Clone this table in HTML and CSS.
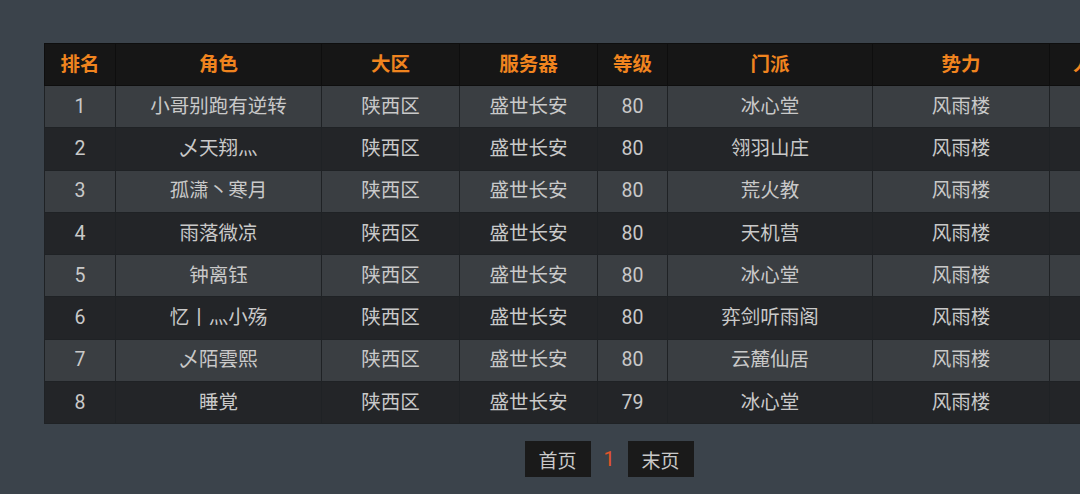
FILE: index.html
```html
<!DOCTYPE html>
<html lang="zh-CN">
<head>
<meta charset="utf-8">
<title>排名</title>
<link rel="stylesheet" href="styles.css">
</head>
<body>
<div class="page">
  <div class="table-wrap">
    <table class="rank">
      <colgroup>
        <col class="c-rank"><col class="c-role"><col class="c-area"><col class="c-server"><col class="c-level"><col class="c-school"><col class="c-force"><col class="c-extra">
      </colgroup>
      <thead>
        <tr><th>排名</th><th>角色</th><th>大区</th><th>服务器</th><th>等级</th><th>门派</th><th>势力</th><th>人气</th></tr>
      </thead>
      <tbody>
        <tr><td>1</td><td>小哥别跑有逆转</td><td>陕西区</td><td>盛世长安</td><td>80</td><td>冰心堂</td><td>风雨楼</td><td></td></tr>
        <tr><td>2</td><td>乄天翔灬</td><td>陕西区</td><td>盛世长安</td><td>80</td><td>翎羽山庄</td><td>风雨楼</td><td></td></tr>
        <tr><td>3</td><td>孤潇丶寒月</td><td>陕西区</td><td>盛世长安</td><td>80</td><td>荒火教</td><td>风雨楼</td><td></td></tr>
        <tr><td>4</td><td>雨落微凉</td><td>陕西区</td><td>盛世长安</td><td>80</td><td>天机营</td><td>风雨楼</td><td></td></tr>
        <tr><td>5</td><td>钟离钰</td><td>陕西区</td><td>盛世长安</td><td>80</td><td>冰心堂</td><td>风雨楼</td><td></td></tr>
        <tr><td>6</td><td>忆丨灬小殇</td><td>陕西区</td><td>盛世长安</td><td>80</td><td>弈剑听雨阁</td><td>风雨楼</td><td></td></tr>
        <tr><td>7</td><td>乄陌雲熙</td><td>陕西区</td><td>盛世长安</td><td>80</td><td>云麓仙居</td><td>风雨楼</td><td></td></tr>
        <tr><td>8</td><td>睡覚</td><td>陕西区</td><td>盛世长安</td><td>79</td><td>冰心堂</td><td>风雨楼</td><td></td></tr>
      </tbody>
    </table>
  </div>
  <div class="pager">
    <span class="pg-btn">首页</span>
    <span class="pg-cur">1</span>
    <span class="pg-btn">末页</span>
  </div>
</div>
</body>
</html>
```
FILE: styles.css
```css
html, body {
  margin: 0;
  padding: 0;
  background: #3b434b;
  overflow: hidden;
  width: 1080px;
  height: 494px;
}
body {
  font-family: Roboto, "Noto Sans CJK SC", sans-serif;
  color: #c9c9c9;
}
.page {
  padding: 43px 0 0 44px;
  box-sizing: border-box;
  height: 494px;
}
.table-wrap {
  width: 1036px;
  overflow: hidden;
}
.rank {
  border-collapse: collapse;
  table-layout: fixed;
  width: 1091px;
  font-size: 19.5px;
}
.c-rank { width: 71px; }
.c-role { width: 206px; }
.c-area { width: 138px; }
.c-server { width: 138px; }
.c-level { width: 70px; }
.c-school { width: 205px; }
.c-force { width: 177px; }
.c-extra { width: 86px; }
.rank th, .rank td {
  border: 1px solid #1f2225;
  text-align: center;
  padding: 0;
  white-space: nowrap;
  line-height: 1;
}
.rank th {
  height: 38px;
  padding-bottom: 3px;
  background: #161616;
  color: #f0841f;
  font-weight: 700;
  font-family: "Noto Sans CJK SC", sans-serif;
  border-color: #0e0e0e;
}
.rank td {
  height: 41.25px;
}
.rank tbody tr:nth-child(odd) td { background: #3a3e42; }
.rank tbody tr:nth-child(even) td { background: #232528; }
.pager {
  display: flex;
  justify-content: center;
  align-items: center;
  margin-top: 17px;
  width: 1036px;
  padding-left: 94px;
  box-sizing: border-box;
  font-size: 19px;
}
.pg-btn {
  display: inline-flex;
  align-items: center;
  justify-content: center;
  width: 66px;
  height: 36px;
  background: #1a1a1a;
  color: #c9c9c9;
  font-family: "Noto Sans CJK SC", sans-serif;
}
.pg-cur {
  width: 37px;
  text-align: center;
  color: #e3552a;
  font-size: 20px;
}
```
